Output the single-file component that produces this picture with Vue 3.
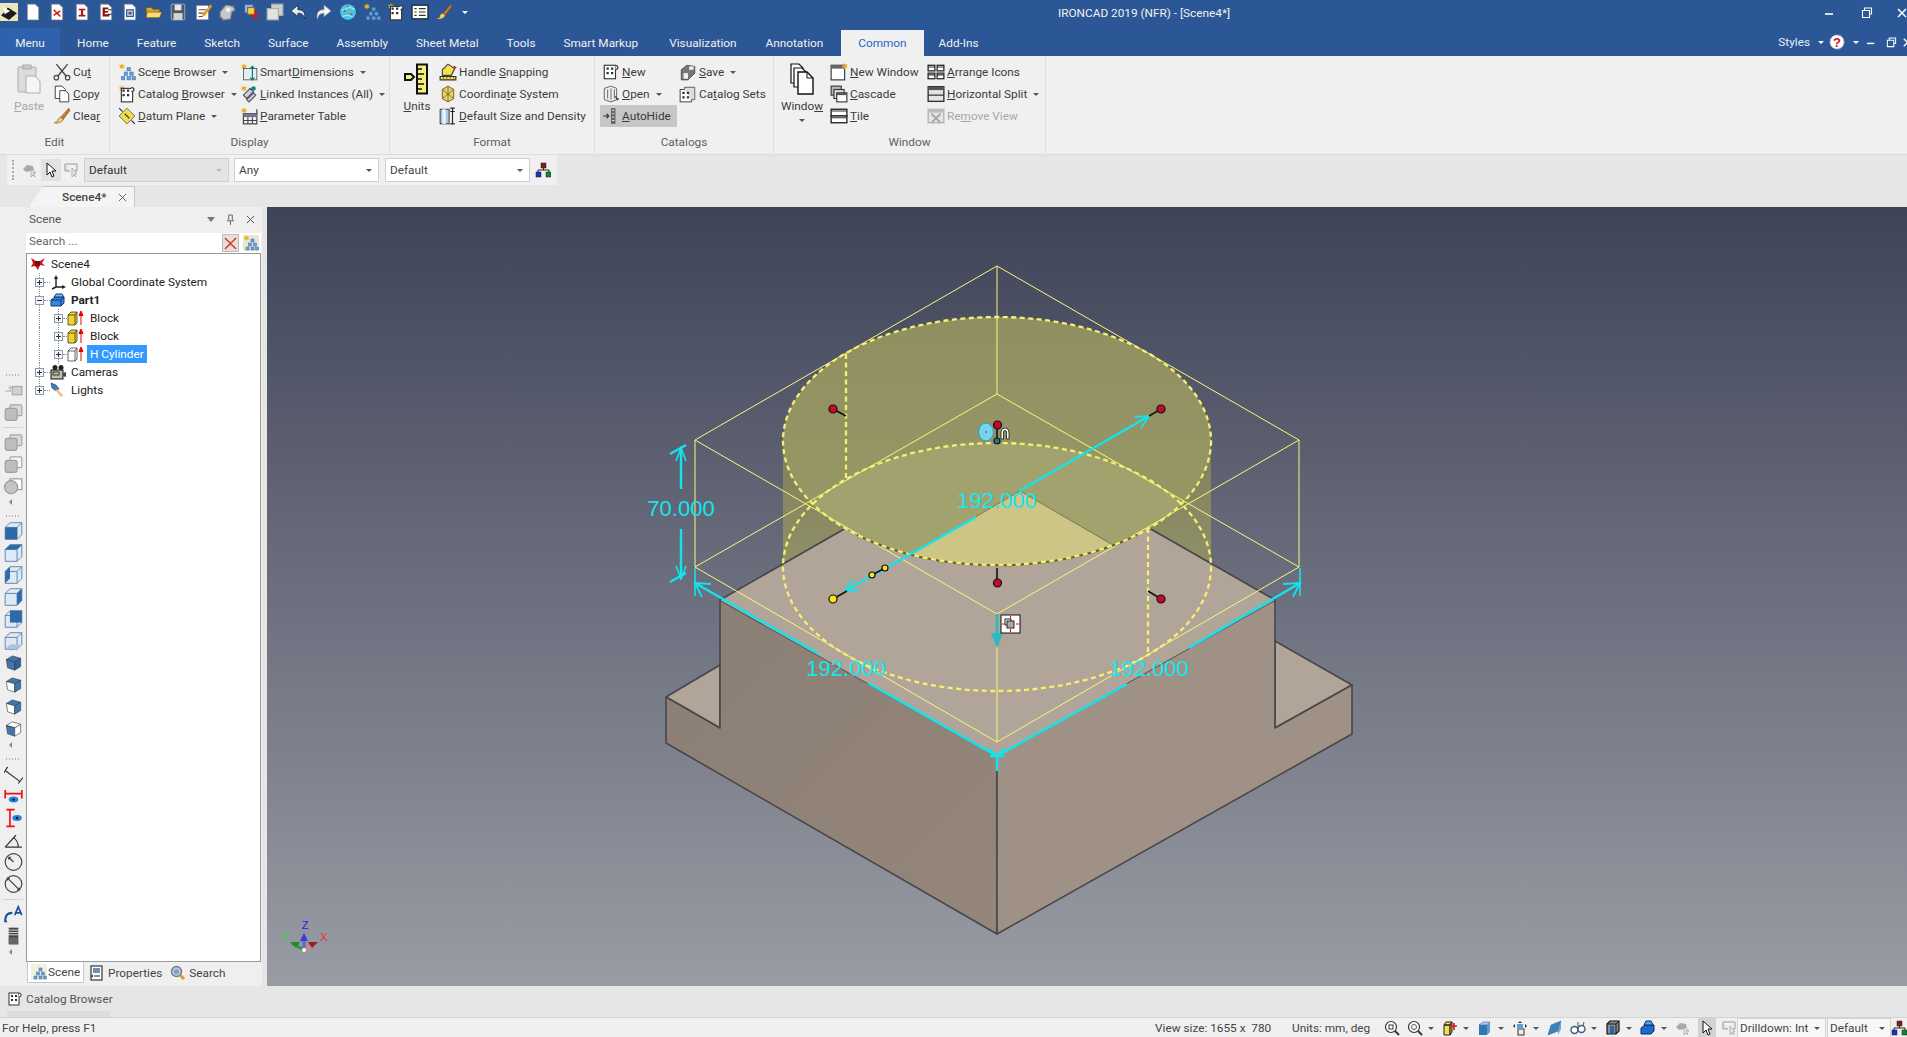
<template>
  <div class="app">
    <!-- title bar -->
    <div class="titlebar">
      <div class="qat">
        <svg v-for="q in qat" :key="q" class="ico qat-ico" viewBox="0 0 16 16" v-html="icons[q]"></svg>
        <span class="caret caret-white"></span>
      </div>
      <div class="title">IRONCAD 2019 (NFR) - [Scene4*]</div>
      <div class="win-btns">
        <svg class="win-btn" viewBox="0 0 12 12"><path d="M1 7h8" stroke="#fff" stroke-width="1.6"/></svg>
        <svg class="win-btn" viewBox="0 0 12 12"><path d="M3.5 3V1h7v6h-2M1.5 3.5h7v7h-7z" fill="none" stroke="#fff" stroke-width="1.1"/></svg>
        <svg class="win-btn win-close" viewBox="0 0 12 12"><path d="M2 2l8 8M10 2l-8 8" stroke="#fff" stroke-width="1.5"/></svg>
      </div>
    </div>

    <!-- ribbon tabs -->
    <div class="menubar">
      <div class="menu-btn">Menu</div>
      <div
        v-for="t in tabs"
        :key="t"
        class="tab"
        :class="{ active: t === 'Common' }"
      >{{ t }}</div>
      <div class="menu-right">
        <span>Styles</span>
        <span class="caret caret-white car-a"></span>
        <svg class="help" viewBox="0 0 16 16">
          <circle cx="8" cy="8" r="7" fill="#fff" stroke="#bbb" stroke-dasharray="2 1"/>
          <text x="8" y="12.5" text-anchor="middle" class="help-q">?</text>
        </svg>
        <span class="caret caret-white car-b"></span>
        <svg class="mini-btn mini-min" viewBox="0 0 12 12"><path d="M1 7h8" stroke="#fff" stroke-width="1.6"/></svg>
        <svg class="mini-btn mini-res" viewBox="0 0 12 12"><path d="M3.5 3V1h7v6h-2M1.5 3.5h7v7h-7z" fill="none" stroke="#fff" stroke-width="1.1"/></svg>
        <svg class="mini-btn mini-x" viewBox="0 0 12 12"><path d="M2 2l8 8M10 2l-8 8" stroke="#fff" stroke-width="1.5"/></svg>
      </div>
    </div>

    <!-- ribbon -->
    <div class="ribbon">
      <div v-for="g in groups" :key="g.name" class="group" :class="g.cls">
        <div class="group-body">
          <div v-if="g.big" class="big" :class="{ off: g.big.off }">
            <svg class="ico-big" viewBox="0 0 28 32" v-html="icons[g.big.icon]"></svg>
            <span class="big-lbl">
              <template v-for="(p, i) in keyed(g.big.label)" :key="i">
                <u v-if="i === 1">{{ p }}</u><template v-else>{{ p }}</template>
              </template>
            </span>
            <span v-if="g.big.caret" class="caret big-caret"></span>
          </div>
          <div v-for="(col, ci) in g.cols" :key="ci" class="col">
            <div
              v-for="it in col"
              :key="it.label"
              class="rb-item"
              :class="{ on: it.on, off: it.off }"
            >
              <svg class="ico rb-ico" viewBox="0 0 16 16" v-html="icons[it.icon]"></svg>
              <span>
                <template v-for="(p, i) in keyed(it.label)" :key="i">
                  <u v-if="i === 1">{{ p }}</u><template v-else>{{ p }}</template>
                </template>
              </span>
              <span v-if="it.caret" class="caret rb-caret"></span>
            </div>
          </div>
        </div>
        <div class="group-name">{{ g.name }}</div>
      </div>
    </div>

    <!-- selection toolbar -->
    <div class="toolrow">
      <div class="toolstrip">
        <span class="grip"></span>
        <svg class="ico tool-ico" viewBox="0 0 16 16" v-html="icons.selGrey"></svg>
        <span class="tool-on"><svg class="ico" viewBox="0 0 16 16" v-html="icons.arrow"></svg></span>
        <svg class="ico tool-ico" viewBox="0 0 16 16" v-html="icons.selBox"></svg>
        <div class="combo combo-off">Default<span class="caret"></span></div>
        <div class="combo">Any<span class="caret"></span></div>
        <div class="combo">Default<span class="caret"></span></div>
        <svg class="ico tree-ico" viewBox="0 0 16 16" v-html="icons.network"></svg>
      </div>
    </div>

    <!-- document tabs -->
    <div class="docrow">
      <div class="doctab">
        <span>Scene4*</span>
        <svg class="doc-x" viewBox="0 0 10 10"><path d="M1 1l8 8M9 1l-8 8" stroke="#555" stroke-width="1"/></svg>
      </div>
    </div>

    <!-- main area -->
    <div class="main">
      <div class="strip">
        <template v-for="(s, i) in strip" :key="i">
          <span v-if="s === 'dots'" class="dots"></span>
          <span v-else-if="s === 'sep'" class="strip-sep"></span>
          <span v-else-if="s === 'more'" class="more"></span>
          <svg v-else class="ico strip-ico" viewBox="0 0 16 16" v-html="icons[s]"></svg>
        </template>
      </div>

      <div class="panel">
        <div class="panel-head">
          <span>Scene</span>
          <span class="caret panel-caret"></span>
          <svg class="pin" viewBox="0 0 10 12"><path d="M3 1h4v5l1.5 1.5h-7L3 6zM5 8v4" fill="none" stroke="#555"/></svg>
          <svg class="pin-x" viewBox="0 0 10 10"><path d="M1 1l8 8M9 1l-8 8" stroke="#555" stroke-width="1.1"/></svg>
        </div>
        <div class="search">
          <span class="search-text">Search ...</span>
          <span class="search-x"><svg viewBox="0 0 14 14"><path d="M1 1l12 12M13 1L1 13" stroke="#d4343a" stroke-width="1.6"/></svg></span>
          <svg class="ico" viewBox="0 0 16 16" v-html="icons.sceneTree"></svg>
        </div>
        <div class="tree">
          <div v-for="r in rows" :key="r.id" class="row" :class="'lv' + r.level">
            <span v-if="r.level === 2" class="guide"></span>
            <span v-if="r.level > 0" class="exp" :class="{ last: r.last }">
              <i class="minus"></i><i v-if="!r.open" class="plus"></i>
            </span>
            <span v-if="r.level > 0" class="hdot"></span>
            <svg class="row-ico" :viewBox="r.level === 2 ? '0 0 18 16' : '0 0 16 16'" v-html="icons[r.icon]"></svg>
            <span class="lbl" :class="{ bold: r.bold, sel: r.sel }">{{ r.label }}</span>
          </div>
        </div>
        <div class="panel-tabs">
          <div class="ptab ptab-on"><svg class="ico" viewBox="0 0 16 16" v-html="icons.sceneBlue"></svg>Scene</div>
          <div class="ptab"><svg class="ico" viewBox="0 0 16 16" v-html="icons.props"></svg>Properties</div>
          <div class="ptab"><svg class="ico" viewBox="0 0 16 16" v-html="icons.find"></svg>Search</div>
        </div>
      </div>

      <!-- 3D view -->
      <div class="view">
        <svg class="scene" viewBox="267 206 1640 779">
          <defs>
            <linearGradient id="bodyG" x1="0" y1="0" x2="0" y2="1">
              <stop offset="0" stop-color="#7f805c"/>
              <stop offset="1" stop-color="#909068"/>
            </linearGradient>
            <linearGradient id="topG" x1="0" y1="0" x2="0" y2="1">
              <stop offset="0" stop-color="#8f8f60"/>
              <stop offset="1" stop-color="#9a9a68"/>
            </linearGradient>
            <linearGradient id="leftG" x1="0" y1="0" x2="1" y2="1">
              <stop offset="0" stop-color="#8b7e74"/>
              <stop offset="1" stop-color="#94867b"/>
            </linearGradient>
            <clipPath id="topClip"><ellipse cx="997" cy="440" rx="214" ry="124"/></clipPath>
            <clipPath id="lowClip"><ellipse cx="997" cy="566" rx="214" ry="124"/></clipPath>
          </defs>

          <!-- stepped base -->
          <g stroke="#47474a" stroke-width="1.6" stroke-linejoin="round">
            <polygon points="666,696 720,664 720,727" fill="#b1a498"/>
            <polygon points="1275,640 1352,684 1275,727" fill="#b1a498"/>
            <polygon points="720,599 997,755 997,933 666,742 666,696 720,727" fill="url(#leftG)"/>
            <polygon points="997,755 1275,599 1275,727 1352,684 1352,733 997,933" fill="#9f9185"/>
          </g>

          <!-- cylinder -->
          <rect x="783" y="440" width="428" height="126" fill="url(#bodyG)"/>
          <polygon points="720,599 997,442 1275,599 997,755" fill="#b1a498"/>
          <path d="M720 599L860 519M1275 599L1135 519" stroke="#47474a" stroke-width="1.6"/>
          <ellipse cx="997" cy="440" rx="214" ry="124" fill="url(#topG)"/>
          <g clip-path="url(#topClip)">
            <ellipse cx="997" cy="566" rx="214" ry="124" fill="#a2a26f"/>
            <g clip-path="url(#lowClip)">
              <polygon points="1020,490 860,583 1180,583" fill="#cdc585"/>
              <path d="M1020 490L860 583M1020 490L1180 583" stroke="#7c7a52" stroke-width="1"/>
            </g>
          </g>

          <!-- bounding box -->
          <g fill="none" stroke="#f8f87c" stroke-width="1">
            <polygon points="997,265 1299,439 997,613 695,439"/>
            <polygon points="997,393 1299,566 997,741 695,566"/>
            <path d="M997 265V393M997 613V741M695 439V566M1299 439V566"/>
          </g>

          <!-- dashed cylinder edges -->
          <path d="M857 534A214 124 0 0 0 1137 534" fill="none" stroke="#63623f" stroke-width="2"/>
          <g fill="none" stroke="#f6f070" stroke-width="2.3" stroke-dasharray="5 3.5">
            <ellipse cx="997" cy="440" rx="214" ry="124"/>
            <ellipse cx="997" cy="566" rx="214" ry="124"/>
            <path d="M846 353V480M1148 527V655"/>
          </g>

          <!-- dimensions -->
          <g fill="none" stroke="#12e4ee" stroke-width="2.4">
            <path d="M681 447V488M681 528V578M670 453L686 444M670 581L686 572"/>
            <path d="M676 460L681 447L686 460M676 565L681 578L686 565" stroke-width="1.6"/>
            <path d="M695 582L819 653M868 682L997 755L1127 683M1189 647L1300 582"/>
            <path d="M695 567V595M1300 567V595" stroke-width="1.6"/>
            <path d="M702 596L695 582L711 583M1283 583L1300 582L1293 596" stroke-width="1.8"/>
            <path d="M989 748L997 755L1005 748M997 755V770M990 755H1004"/>
            <path d="M845 590L976 516M1019 490L1149 415"/>
            <path d="M859 589L845 590L853 578M1135 416L1149 415L1141 427" stroke-width="1.8"/>
          </g>
          <path d="M997 613V645" stroke="#2cb9bf" stroke-width="2.6"/>
          <path d="M991 632L997 647L1003 632z" fill="#2cb9bf"/>

          <g class="dim-text">
            <text x="681" y="515">70.000</text>
            <text x="997" y="507">192.000</text>
            <text x="846" y="675">192.000</text>
            <text x="1149" y="675">192.000</text>
          </g>

          <!-- handles -->
          <g stroke="#111" stroke-width="1.6">
            <path d="M833 408L846 415M1161 408L1149 415M997 582V567M1161 598L1148 590M833 598L847 590M872 574L885 567M997 424V440"/>
          </g>
          <g stroke="#111" stroke-width="1.2">
            <circle cx="833" cy="408" r="4" fill="#c4092b"/>
            <circle cx="1161" cy="408" r="4" fill="#c4092b"/>
            <circle cx="997.5" cy="582" r="4" fill="#c4092b"/>
            <circle cx="1161" cy="598" r="4" fill="#c4092b"/>
            <circle cx="997.5" cy="424" r="4" fill="#c4092b"/>
            <circle cx="833" cy="598" r="4" fill="#f4e61c"/>
            <circle cx="872" cy="574" r="3" fill="#f4e61c"/>
            <circle cx="885" cy="567" r="3" fill="#f4e61c"/>
            <circle cx="997" cy="440" r="3" fill="#16808a"/>
          </g>
          <ellipse cx="986" cy="431" rx="7.5" ry="9" fill="#6fd6ee" stroke="#3a8fc0"/>
          <circle cx="986" cy="431" r="1" fill="#e33"/>
          <path d="M1001 438v-7a4 4 0 0 1 8 0v7h-2.5v-7a1.5 1.5 0 0 0-3 0v7z" fill="#fff" stroke="#111" stroke-width=".8"/>

          <!-- handle box -->
          <rect x="1001" y="614" width="19" height="18" fill="#fff" stroke="#111"/>
          <rect x="1007" y="620" width="7" height="7" fill="#aaa" stroke="#222"/>
          <path d="M1005 618h6v2M1005 618v6h2" fill="none" stroke="#222"/>
          <path d="M1010.5 615v3M1010.5 628v3M1002 623h3M1016 623h3" stroke="#e11" stroke-width="1.2"/>

          <!-- triad -->
          <path d="M304 949V935" stroke="#5f63d8" stroke-width="3"/>
          <path d="M300 940L304 932L308 940z" fill="#3c40d0"/>
          <path d="M304 949L292 942" stroke="#2f9a3a" stroke-width="3"/>
          <path d="M290 941L300 941L296 947z" fill="#1b8e2a"/>
          <path d="M304 949L316 942" stroke="#e07a80" stroke-width="3"/>
          <path d="M318 941L308 941L312 947z" fill="#912126"/>
          <circle cx="304" cy="949" r="2" fill="#fff"/>
          <g class="triad-text">
            <text x="305" y="928" fill="#1a1af0">Z</text>
            <text x="324" y="940" fill="#ee2a2a">X</text>
            <text x="285" y="940" fill="#22dd22">Y</text>
          </g>
        </svg>
      </div>
    </div>

    <!-- catalog bar -->
    <div class="catalog">
      <div class="cat-tab">
        <svg class="ico" viewBox="0 0 16 16" v-html="icons.catNew"></svg>
        <span>Catalog Browser</span>
      </div>
      <span class="cat-bar"></span>
    </div>

    <!-- status bar -->
    <div class="status">
      <span class="st-help">For Help, press F1</span>
      <span class="st-size">View size: 1655 x&nbsp; 780</span>
      <span class="st-units">Units: mm, deg</span>
      <template v-for="(s, i) in statusIcons" :key="i">
        <span v-if="s === 'caret'" class="caret st-caret"></span>
        <span v-else-if="s === 'arrow'" class="st-on"><svg class="ico" viewBox="0 0 16 16" v-html="icons.arrow"></svg></span>
        <svg v-else class="ico st-ico" viewBox="0 0 16 16" v-html="icons[s]"></svg>
      </template>
      <div class="st-combo st-drill">Drilldown: Int<span class="caret"></span></div>
      <div class="st-combo st-def">Default<span class="caret"></span></div>
      <svg class="ico" viewBox="0 0 16 16" v-html="icons.network"></svg>
    </div>
  </div>
</template>

<script setup>
const star = '<path d="M3.5 0l.7 2 2-.6-1.2 1.7 1.2 1.7-2-.6-.7 2-.7-2-2 .6 1.2-1.7L.8 1.4l2 .6z" fill="#e8b020"/>'
const tree = '<g fill="#6d9fd6" stroke="#3b74b0" stroke-width=".5"><rect x="8" y="4" width="3" height="3"/><rect x="5.5" y="8" width="3" height="3"/><rect x="10.5" y="8" width="3" height="3"/><rect x="3" y="12" width="3" height="3"/><rect x="8" y="12" width="3" height="3"/><rect x="12.5" y="12" width="3" height="3"/></g>'
const grid = '<rect x="2" y="2" width="10" height="12" fill="#fff" stroke="#333"/><path d="M12 2l2 1v2l-2 1" fill="#fff" stroke="#333"/><g fill="#333"><rect x="4" y="4" width="2" height="2"/><rect x="8" y="4" width="2" height="2"/><rect x="4" y="8" width="2" height="2"/><rect x="8" y="8" width="2" height="2"/></g>'
const brush = '<path d="M14 1L7 9l2 2 6-8z" fill="#c87a3a" stroke="#6b3b16" stroke-width=".5"/><path d="M7 9c-2 0-3 2-3 4-1 0-2 .5-3 1 3 1 7 0 8-3z" fill="#f0d060" stroke="#555" stroke-width=".5"/>'
const docBase = '<path d="M3 1h7l3 3v11H3z" fill="#fff" stroke="#888" stroke-width=".6"/>'
const wireCube = '<path d="M1 5h10v10H1zM1 5l4-4h10v10l-4 4M11 5l4-4" fill="#dfe9f5" stroke="#5f85b0" stroke-width=".8"/>'
const solid = (top, left, right) => `<path d="M2 5l5-3 7 2-5 3z" fill="${top}" stroke="#333" stroke-width=".5"/><path d="M2 5l7 2v7L3 12z" fill="${left}" stroke="#333" stroke-width=".5"/><path d="M9 7l5-3v7l-5 3z" fill="${right}" stroke="#333" stroke-width=".5"/>`
const blockIcon = (c) => `<path d="M1 5l3-3h6v11l-2 2H1z" fill="${c}" stroke="#222" stroke-width=".7"/><path d="M1 5h7v10M8 5l2-3" fill="none" stroke="#222" stroke-width=".7"/><path d="M14 15V3M12 5.5L14 1l2 4.5z" stroke="#e00" fill="#e00"/>`
const greyCube = '<rect x="5" y="2" width="10" height="9" rx="1" fill="#d9d9d9" stroke="#a8a8a8"/><rect x="1" y="5" width="10" height="10" rx="2" fill="#bdbdbd" stroke="#a0a0a0"/>'

const icons = {
  logo: '<rect width="16" height="16" fill="#e9e5bd"/><path d="M1 11L7 4l8 5-7 6z" fill="#1c1c1c"/><path d="M3 4l6 3-5 3z" fill="#fff"/>',
  newDoc: docBase,
  redDoc: docBase + '<path d="M5 6l6 6M11 7l-6 4" stroke="#d01818" stroke-width="1.4"/>',
  iDoc: docBase + '<path d="M5 5h6v1.5H9v4h2V12H5v-1.5h2v-4H5z" fill="#a81818"/>',
  eDoc: docBase + '<path d="M5 4h5v1.5H7V7h3v1.5H7V10h4v2H5z" fill="#8a1010"/><path d="M10 6h3M10 10h3" stroke="#222"/>',
  partDoc: docBase + '<rect x="5" y="6" width="6" height="6" fill="#9fd0f0" stroke="#1860a8"/><circle cx="8" cy="9" r="1.3" fill="#c22"/>',
  open: '<path d="M1 4h5l1 1.5h6V13H1z" fill="#d8a928" stroke="#6a5210" stroke-width=".6"/><path d="M2 8h13l-2 5H1z" fill="#f7de7a" stroke="#6a5210" stroke-width=".6"/>',
  save: '<rect x="2" y="1" width="12" height="14" rx="1" fill="#4b5a6a" stroke="#ccc" stroke-width=".6"/><rect x="5" y="1.5" width="6" height="5" fill="#e7e7e7"/><rect x="4" y="9" width="8" height="6" fill="#d4d4d4"/>',
  note: '<rect x="2" y="2" width="11" height="13" fill="#fff" stroke="#666" stroke-width=".6"/><path d="M4 6h7M4 9h5M4 12h4" stroke="#555"/><path d="M15 1L8 9l-1 3 3-1 6-8z" fill="#e8a020"/>',
  gear: '<path d="M2 8l5-6 6 1 2 3-3 2-1 6-6 1-3-3z" fill="#c7c7c7" stroke="#8e8e8e"/><circle cx="9" cy="6" r="2" fill="#eee"/>',
  cubePlus: '<rect x="2" y="1" width="8" height="8" fill="#8ab4e8" stroke="#2255aa"/><rect x="5" y="4" width="6" height="6" fill="#f5d050" stroke="#a06a10"/><path d="M12 8v7M8.5 11.5h7" stroke="#d01818" stroke-width="1.6"/>',
  grayDoc: '<rect x="5" y="1" width="10" height="10" fill="#cfcfcf" stroke="#aaa"/><rect x="1" y="5" width="10" height="10" fill="#e2e2e2" stroke="#aaa"/>',
  undo: '<path d="M7 2L1 7l6 5V9c3 0 5 1 6 5 1-5-1-8-6-8z" fill="#e8eef6" stroke="#223" stroke-width=".7"/>',
  redo: '<path d="M9 2l6 5-6 5V9C6 9 4 10 3 14 2 9 4 6 9 6z" fill="#f7f7f7" stroke="#aaa" stroke-width=".7"/>',
  globe: '<circle cx="8" cy="8" r="7" fill="#45c8e0"/><path d="M2 6c3 1 5-1 7-3 2 2 4 2 5 3M3 12c2-1 6-1 9 0" stroke="#a9ecf5" fill="none"/><g fill="#e33"><circle cx="5" cy="7" r="1"/><circle cx="11" cy="10" r="1"/><circle cx="8" cy="3" r=".8"/></g>',
  sceneTree: star + tree,
  sceneBlue: '<rect width="16" height="16" fill="#f0ead0" opacity=".7"/>' + tree,
  catStar: star + grid.replace('x="2" y="2" width="10"', 'x="3" y="3" width="10"'),
  list: '<rect x="1" y="2" width="14" height="12" fill="#fff" stroke="#222"/><path d="M3 5h2M3 8h2M3 11h2M7 5h6M7 8h6M7 11h6" stroke="#333"/>',
  brush,
  paste: '<rect x="3" y="4" width="18" height="25" rx="1" fill="#dcdcdc" stroke="#adadad"/><rect x="8" y="2" width="8" height="4" fill="#cacaca" stroke="#a8a8a8"/><path d="M11 13h9l5 5v12H11z" fill="#f5f5f5" stroke="#adadad"/>',
  cut: '<path d="M3 1l9 11M13 1L4 12" stroke="#444" stroke-width="1.2"/><circle cx="3" cy="13" r="2" fill="none" stroke="#444"/><circle cx="13" cy="13" r="2" fill="none" stroke="#444"/>',
  copy: '<path d="M2 1h6l3 3v8H2z" fill="#fff" stroke="#333" stroke-width=".8"/><path d="M6 5h5l3 3v7H6z" fill="#fff" stroke="#333" stroke-width=".8"/>',
  datum: '<path d="M8 1l7 7-7 7-7-7z" fill="#f2dc4c" stroke="#555" stroke-width=".7"/><path d="M6 6l4 4" stroke="#333"/><path d="M1 1l3 3M12 12l3 3" stroke="#335"/>',
  smartDim: star + '<rect x="3" y="5" width="12" height="10" fill="#dff0f4" stroke="#333" stroke-width=".6"/><path d="M11 3v12M9 5l2-2 2 2M9 13l2 2 2-2" fill="none" stroke="#0a7a5a"/>',
  linked: star + '<path d="M3 9l6-6 3 3-6 6zM6 13l6-6 2 2-6 6z" fill="#ccd" stroke="#556"/><circle cx="12" cy="3" r="2" fill="#0a8a6a"/>',
  paramTable: star + '<rect x="3" y="6" width="12" height="9" fill="#f4f4f4" stroke="#333"/><rect x="3" y="6" width="12" height="3" fill="#6d7a8c"/><path d="M7 9v6M11 9v6M3 12h12" stroke="#444"/><path d="M15 2v4" stroke="#333"/>',
  units: '<rect x="14" y="1.5" width="10" height="29" fill="#f1f17a" stroke="#111" stroke-width="2"/><path d="M14 6h5M14 11h7M14 16h5M14 21h7M14 26h5" stroke="#111" stroke-width="1.4"/><path d="M2 11h6l3 3-3 3H2z" fill="#f1f17a" stroke="#111" stroke-width="2"/>',
  snap: '<path d="M3 6l5-5 6 4-3 6H3z" fill="#f6e050" stroke="#444"/><path d="M13 3l2 1-2 1" stroke="#a22" fill="none"/><path d="M1 12h14v3H1z" fill="#f6e050" stroke="#333"/><path d="M4 12v2M7 12v2M10 12v2M13 12v2" stroke="#333" stroke-width=".6"/>',
  coord: '<path d="M8 1l5 3v8l-5 3-5-3V4z" fill="#ecd36a" stroke="#8a7530"/><path d="M3 4l10 8M13 4L3 12M8 1v14" stroke="#7a6a30" stroke-width=".8"/>',
  sizeDens: '<rect x="1" y="2" width="8" height="13" fill="#a9c8e8" stroke="#333" stroke-width=".8"/><rect x="3" y="2" width="3" height="13" fill="#e8f2fb"/><path d="M12 1v14M10 1h4M10 15h4M10 4h4" fill="none" stroke="#222"/>',
  catNew: grid,
  catOpen: '<path d="M2 3l6-2 5 2v10l-5 2-6-2z" fill="#eee" stroke="#444" stroke-width=".7"/><path d="M5 4v8M8 3v10M11 4v8" stroke="#777"/><path d="M12 10l1.5 3 1.5-1" stroke="#333" fill="none"/>',
  autoHide: '<path d="M1 8h5M4 6l2 2-2 2" stroke="#333" fill="none"/><rect x="8" y="1" width="4" height="14" fill="#666"/><path d="M9 3h2M9 6h2M9 9h2M9 12h2" stroke="#eee" stroke-width=".8"/>',
  catSave: '<path d="M2 6l5-4 7 1v6l-6 6H2z" fill="#777" stroke="#333" stroke-width=".6"/><rect x="4" y="9" width="4" height="5" fill="#eee"/><path d="M9 3h4v3H9z" fill="#eee"/>',
  catSets: '<rect x="1" y="4" width="10" height="11" fill="#fff" stroke="#333" stroke-width=".8"/><path d="M5 4V2h9v11h-3" fill="#ddd" stroke="#555" stroke-width=".8"/><g fill="#333"><rect x="3" y="6" width="2" height="2"/><rect x="7" y="6" width="2" height="2"/><rect x="3" y="10" width="2" height="2"/><rect x="7" y="10" width="2" height="2"/></g>',
  windowBig: '<path d="M3 1h8l4 4v15H3z" fill="#fff" stroke="#111" stroke-width="1.2"/><path d="M6 5h8l4 4v15H6z" fill="#fff" stroke="#111" stroke-width="1.2"/><path d="M10 9h9l6 6v16H10z" fill="#fff" stroke="#111" stroke-width="1.4"/><path d="M19 9v6h6" fill="none" stroke="#111"/>',
  newWin: '<rect x="1" y="2" width="12" height="13" fill="#fff" stroke="#333"/><rect x="1" y="2" width="12" height="3" fill="#666"/><path d="M13 0l.8 1.6 1.8-.4-1 1.6 1 1.6-1.8-.4-.8 1.600-.8-1.600-1.800.4 1-1.600-1-1.600 1.800.4z" fill="#e8a020"/>',
  cascade: '<rect x="1" y="1" width="9" height="8" fill="#bbb" stroke="#333"/><rect x="3.500" y="4" width="9" height="8" fill="#ddd" stroke="#333"/><rect x="6" y="7" width="9" height="8" fill="#fff" stroke="#333"/><rect x="6" y="7" width="9" height="2" fill="#555"/>',
  tile: '<rect x="1" y="2" width="14" height="6" fill="#fff" stroke="#222" stroke-width="1.200"/><rect x="1" y="8" width="14" height="6" fill="#fff" stroke="#222" stroke-width="1.200"/><path d="M1 3.500h14M1 9.500h14" stroke="#333"/>',
  arrange: '<g fill="#fff" stroke="#222" stroke-width="1.100"><rect x="1" y="2" width="6" height="5"/><rect x="9" y="2" width="6" height="5"/><rect x="1" y="9" width="6" height="5"/><rect x="9" y="9" width="6" height="5"/></g><path d="M1 3.500h6M9 3.500h6M1 10.500h6M9 10.500h6" stroke="#333"/>',
  hsplit: '<rect x="1" y="1.500" width="14" height="13" fill="#e4e4e4" stroke="#222" stroke-width="1.100"/><rect x="1" y="1.500" width="14" height="3" fill="#555"/><path d="M1 9h14" stroke="#222"/>',
  removeView: '<rect x="1" y="2" width="14" height="12" fill="#e6e6e6" stroke="#aaa"/><rect x="1" y="2" width="14" height="3" fill="#bbb"/><path d="M4 6l8 8M12 6l-8 8" stroke="#aaa" stroke-width="1.800"/>',
  selGrey: '<path d="M1 7l4-4 6 1 1 4-3 1-5 1z" fill="#a9a9a9"/><path d="M9 7v8l2-2 2 2-2-4h3z" fill="#e8e8e8" stroke="#999" stroke-width=".7"/>',
  arrow: '<path d="M4 1v12l3-3 2 5 2-1-2-5h4z" fill="#fff" stroke="#111"/>',
  selBox: '<path d="M1 2h12v7H8" fill="none" stroke="#999"/><path d="M1 2v7h5" fill="#e4e4e4" stroke="#999"/><path d="M8 6v9l2-2 2 2-2-3h3z" fill="#eee" stroke="#999" stroke-width=".7"/>',
  network: '<rect x="6" y="1" width="5" height="5" fill="#8b1a1a" stroke="#222" stroke-width=".5"/><path d="M8.500 6v2M3 10V8h11v2" fill="none" stroke="#222"/><rect x="1" y="10" width="5" height="5" fill="#1a2fd0" stroke="#222" stroke-width=".5"/><rect x="11" y="10" width="5" height="5" fill="#118a2a" stroke="#222" stroke-width=".5"/>',
  sceneRed: '<path d="M1 2l5 3 4 0 5-3-3 5 3 3-5-1-2 5-3-4-4 1 2-4z" fill="#d21414"/><path d="M5 5h5v5H5z" fill="#6b1010"/>',
  axes: '<path d="M6 13V4M6 13h8M6 13l-4 2" stroke="#222" stroke-width="1.400"/><path d="M4 5l2-4 2 4zM12 11l4 2-4 2z" fill="#222"/>',
  part: '<path d="M1 8l4-3h9v6l-3 3H1z" fill="#3a86d8" stroke="#0c3a80"/><path d="M4 5l2-3h6l2 3z" fill="#7ab8f0" stroke="#0c3a80"/><path d="M1 8h10v6M11 8l3-3" fill="none" stroke="#0c3a80"/>',
  blockY: blockIcon('#f2d22c'),
  blockW: blockIcon('#fff'),
  camera: '<circle cx="5" cy="3.500" r="2.500" fill="#222"/><circle cx="11" cy="3.500" r="2.500" fill="#222"/><rect x="1" y="6" width="12" height="9" fill="#bbb" stroke="#111"/><rect x="3" y="8" width="6" height="3" fill="#d2c27a" stroke="#333"/><path d="M13 9l3-1v5l-3-1z" fill="#444"/>',
  light: '<path d="M1 1l5 2 3 4-3 2-4-3z" fill="#3b7dc8" stroke="#16386a" stroke-width=".6"/><path d="M7 7l8 7-5 1-5-6z" fill="#f6ecbc"/><path d="M5 6l7 8" stroke="#e45" stroke-width=".8"/>',
  props: '<rect x="2" y="1" width="11" height="14" fill="#fff" stroke="#222" stroke-width="1.100"/><rect x="4" y="3" width="7" height="5" fill="#6d8fb5"/><path d="M5 11h6M4 10l-1.500 1 1.500 1" stroke="#222" fill="none"/>',
  find: '<circle cx="6.500" cy="6.500" r="5" fill="#b9cbe8" stroke="#7a7a7a" stroke-width="1.400"/><circle cx="6.500" cy="6.500" r="2.600" fill="#7f9fd0"/><path d="M10 10l4 4" stroke="#d49a28" stroke-width="3"/>',
  stepCube1: greyCube,
  pull: '<path d="M1 9h5" stroke="#bbb"/><path d="M4 6h3M5 4v5" stroke="#bbb"/><rect x="7" y="5" width="8" height="7" fill="#cfcfcf" stroke="#aaa"/>',
  stepCube2: greyCube,
  stepCube3: '<rect x="5" y="2" width="10" height="9" rx="1" fill="#f4f4f4" stroke="#a8a8a8"/><rect x="1" y="5" width="10" height="10" rx="2" fill="#bdbdbd" stroke="#a0a0a0"/>',
  stepRound: '<rect x="5" y="2" width="10" height="9" fill="#fff" stroke="#999"/><circle cx="6" cy="9" r="5.500" fill="#c4c4c4" stroke="#999"/>',
  faceFront: wireCube + '<rect x="1" y="5" width="10" height="10" fill="#2f6aa8"/>',
  faceTop: wireCube + '<path d="M1 5l4-4h10l-4 4z" fill="#2f6aa8"/>',
  faceLeft: wireCube + '<path d="M1 5l4-4v10l-4 4z" fill="#2f6aa8"/>',
  faceRight: wireCube + '<path d="M11 5l4-4v10l-4 4z" fill="#2f6aa8"/>',
  faceBack: wireCube + '<rect x="5" y="1" width="10" height="10" fill="#2f6aa8"/>',
  faceBottom: wireCube + '<path d="M1 15l4-4h10l-4 4z" fill="#a8c4e0"/>',
  iso1: solid('#3f77b5', '#3f77b5', '#2f62a0'),
  iso2: solid('#fff', '#fff', '#3f77b5').replace(/#fff/, '#3f77b5'),
  iso3: solid('#3f77b5', '#fff', '#3f77b5'),
  iso4: solid('#3f77b5', '#3f77b5', '#fff').replace(/#3f77b5/, '#fff'),
  dimLine: '<path d="M1 5l12 9M3 2L0 7M16 11l-4 5" stroke="#333" fill="none"/>',
  dimRedH: '<path d="M1 3v7M15 3v7M1 6h14" stroke="#e11" stroke-width="1.400"/><ellipse cx="8" cy="11" rx="4" ry="2.500" fill="#2a82d8"/><circle cx="8" cy="11" r="1" fill="#111"/>',
  dimRedV: '<path d="M2 1h7M2 15h7M5 1v14" stroke="#e11" stroke-width="1.400"/><ellipse cx="11" cy="8" rx="4" ry="2.500" fill="#2a82d8"/><circle cx="11" cy="8" r="1" fill="#111"/>',
  dimAngle: '<path d="M1 14h14M1 14L10 4" stroke="#333"/><path d="M8 6c3 2 4 5 4 8" stroke="#333" fill="none"/>',
  dimRadius: '<circle cx="8" cy="8" r="7" fill="none" stroke="#444"/><path d="M8 8L4 4M4 6V4h2" stroke="#444" fill="none"/>',
  dimDia: '<circle cx="8" cy="8" r="7" fill="none" stroke="#444"/><path d="M3 3l10 10M3 5V3h2M13 11v2h-2" stroke="#444" fill="none"/>',
  dimText: '<path d="M1 14c0-5 2-7 6-7" stroke="#1c4f9a" stroke-width="1.800" fill="none"/><path d="M1 12l2 3-3 0z" fill="#1c4f9a"/><path d="M9 9l3-7 3 7M10 7h4" stroke="#1c4f9a" stroke-width="1.400" fill="none"/>',
  hatch: '<rect x="4" y="1" width="8" height="14" fill="#444"/><path d="M4 3h8M4 5h8M4 7h8" stroke="#ddd" stroke-width=".8"/><rect x="4" y="9" width="8" height="6" fill="#666"/>',
  zoomFit: '<circle cx="7" cy="7" r="5.500" fill="#fff" stroke="#333" stroke-width="1.200"/><rect x="5" y="5" width="4" height="4" fill="none" stroke="#333"/><path d="M11 11l4 4" stroke="#333" stroke-width="2"/>',
  zoom: '<circle cx="7" cy="7" r="5.500" fill="#fff" stroke="#333" stroke-width="1.200"/><circle cx="7" cy="7" r="2.500" fill="none" stroke="#555"/><path d="M11 11l4 4" stroke="#333" stroke-width="2"/>',
  stYellow: '<path d="M2 5l2-3h6l-2 3zM2 5h6v10H2z" fill="#f4dd52" stroke="#222"/><path d="M8 5l2-3v10l-2 3z" fill="#c8a820" stroke="#222"/><path d="M12 3v7M9 6h6" stroke="#e11" stroke-width="1.600"/>',
  stBlue: '<path d="M2 5l4-3h7l-3 3z" fill="#a9c8e8" stroke="#2a4a7a" stroke-width=".5"/><rect x="2" y="5" width="8" height="10" fill="#2f78b8"/><path d="M10 5l3-3v10l-3 3z" fill="#5f9cd0"/>',
  stPan: '<rect x="6" y="9" width="6" height="6" fill="#eee" stroke="#333"/><path d="M8 1l2 2H6zM1 6l2-2v4zM15 6l-2-2v4z" fill="#234"/><rect x="5" y="4" width="6" height="4" fill="#5aa0d8"/>',
  stSlab: '<path d="M1 15l3-10 10-4-3 10z" fill="#3f80bc" stroke="#2a5a8a" stroke-width=".5"/><path d="M11 11l3-10v8l-3 6z" fill="#6fa8d6"/>',
  stGlass: '<circle cx="4.500" cy="10" r="3.500" fill="#fff" stroke="#3a5a80" stroke-width="1.400"/><circle cx="11.500" cy="9" r="3.500" fill="#fff" stroke="#3a5a80" stroke-width="1.400"/><path d="M8 9V2M13 6l1-4" stroke="#3a5a80"/>',
  stBox: '<path d="M2 4l3-3h9v10l-3 3H2z" fill="#8f8f8f" stroke="#111" stroke-width="1.200"/><path d="M2 4h9v10M11 4l3-3" fill="none" stroke="#111"/><rect x="5" y="6" width="4" height="7" fill="#1c6ab5"/>',
  stPart: '<path d="M1 8l4-3h9v6l-3 3H1z" fill="#1c6ad0" stroke="#0c2a60"/><path d="M4 5l2-4h5l2 4z" fill="#5aa0ee" stroke="#0c2a60"/>'
}

const qat = ['logo', 'newDoc', 'redDoc', 'iDoc', 'eDoc', 'partDoc', 'open', 'save', 'note', 'gear', 'cubePlus', 'grayDoc', 'undo', 'redo', 'globe', 'sceneTree', 'catStar', 'list', 'brush']

const tabs = ['Home', 'Feature', 'Sketch', 'Surface', 'Assembly', 'Sheet Metal', 'Tools', 'Smart Markup', 'Visualization', 'Annotation', 'Common', 'Add-Ins']

// "&" marks the access key, it is drawn underlined
const keyed = (s) => {
  const i = s.indexOf('&')
  return [s.slice(0, i), s[i + 1], s.slice(i + 2)]
}

const groups = [
  {
    name: 'Edit',
    cls: 'g-edit',
    big: { icon: 'paste', label: '&Paste', off: true },
    cols: [[
      { icon: 'cut', label: 'Cu&t' },
      { icon: 'copy', label: '&Copy' },
      { icon: 'brush', label: 'Clea&r' }
    ]]
  },
  {
    name: 'Display',
    cls: 'g-display',
    cols: [
      [
        { icon: 'sceneTree', label: 'Sce&ne Browser', caret: true },
        { icon: 'catStar', label: 'Catalog &Browser', caret: true },
        { icon: 'datum', label: '&Datum Plane', caret: true }
      ],
      [
        { icon: 'smartDim', label: 'Smart&Dimensions', caret: true },
        { icon: 'linked', label: '&Linked Instances (All)', caret: true },
        { icon: 'paramTable', label: '&Parameter Table' }
      ]
    ]
  },
  {
    name: 'Format',
    cls: 'g-format',
    big: { icon: 'units', label: '&Units' },
    cols: [[
      { icon: 'snap', label: 'Handle &Snapping' },
      { icon: 'coord', label: 'Coordina&te System' },
      { icon: 'sizeDens', label: '&Default Size and Density' }
    ]]
  },
  {
    name: 'Catalogs',
    cls: 'g-catalogs',
    cols: [
      [
        { icon: 'catNew', label: '&New' },
        { icon: 'catOpen', label: '&Open', caret: true },
        { icon: 'autoHide', label: '&AutoHide', on: true }
      ],
      [
        { icon: 'catSave', label: '&Save', caret: true },
        { icon: 'catSets', label: 'Ca&talog Sets' }
      ]
    ]
  },
  {
    name: 'Window',
    cls: 'g-window',
    big: { icon: 'windowBig', label: 'Windo&w', caret: true },
    cols: [
      [
        { icon: 'newWin', label: '&New Window' },
        { icon: 'cascade', label: '&Cascade' },
        { icon: 'tile', label: '&Tile' }
      ],
      [
        { icon: 'arrange', label: '&Arrange Icons' },
        { icon: 'hsplit', label: '&Horizontal Split', caret: true },
        { icon: 'removeView', label: 'Re&move View', off: true }
      ]
    ]
  }
]

const strip = [
  'dots', 'pull', 'stepCube1', 'sep', 'stepCube2', 'stepCube3', 'stepRound', 'more',
  'dots', 'faceFront', 'faceTop', 'faceLeft', 'faceRight', 'faceBack', 'faceBottom', 'iso1', 'iso2', 'iso3', 'iso4', 'more',
  'dots', 'dimLine', 'dimRedH', 'dimRedV', 'dimAngle', 'dimRadius', 'dimDia', 'sep', 'dimText', 'hatch', 'more'
]

const rows = [
  { id: 1, level: 0, icon: 'sceneRed', label: 'Scene4' },
  { id: 2, level: 1, icon: 'axes', label: 'Global Coordinate System' },
  { id: 3, level: 1, icon: 'part', label: 'Part1', bold: true, open: true },
  { id: 4, level: 2, icon: 'blockY', label: 'Block' },
  { id: 5, level: 2, icon: 'blockY', label: 'Block' },
  { id: 6, level: 2, icon: 'blockW', label: 'H Cylinder', sel: true },
  { id: 7, level: 1, icon: 'camera', label: 'Cameras' },
  { id: 8, level: 1, icon: 'light', label: 'Lights', last: true }
]

const statusIcons = [
  'zoomFit', 'zoom', 'caret', 'stYellow', 'caret', 'stBlue', 'caret', 'stPan', 'caret', 'stSlab',
  'stGlass', 'caret', 'stBox', 'caret', 'stPart', 'caret', 'selGrey', 'arrow', 'selBox'
]
</script>

<style>
html, body { margin: 0; background: #e6e6e6; overflow: hidden; }
</style>

<style scoped>
.app {
  width: 1907px;
  height: 1037px;
  display: flex;
  flex-direction: column;
  background: #e6e6e6;
  font-family: Roboto, "Liberation Sans", sans-serif;
  font-size: 11.8px;
  color: #3c3c3c;
  overflow: hidden;
}

.ico { width: 16px; height: 16px; flex: none; }

.caret {
  display: inline-block;
  width: 0;
  height: 0;
  border-left: 3px solid transparent;
  border-right: 3px solid transparent;
  border-top: 3px solid #555;
  flex: none;
}
.caret-white { border-top-color: #fff; }

/* title */
.titlebar {
  height: 28px;
  flex: none;
  display: flex;
  align-items: center;
  background: #2b5797;
  color: #fff;
}
.qat {
  display: flex;
  align-items: center;
  width: 1058px;
  padding-left: 0;
  padding-bottom: 4px;
  box-sizing: border-box;
}
.qat-ico { width: 18px; height: 18px; margin-right: 6.2px; }
.qat .caret { margin-left: 2px; }
.title { flex: 1; color: #f0f0f0; padding-bottom: 2px; }
.win-btns { display: flex; align-items: center; padding-bottom: 2px; }
.win-btn { width: 12px; height: 12px; margin-left: 25px; }
.win-close { margin-left: 23px; margin-right: -1px; }

/* menu */
.menubar {
  height: 28px;
  flex: none;
  display: flex;
  align-items: flex-end;
  background: #2b5797;
  color: #f0f0f0;
}
.menu-btn {
  width: 60px;
  height: 28px;
  line-height: 31px;
  text-align: center;
  background: #2f62ae;
  margin-right: 3px;
}
.tab { height: 26px; line-height: 26px; padding: 0 14px; }
.tab:nth-child(10) { margin-left: 3px; }
.tab:nth-child(11) { margin-left: 1px; }
.tab.active {
  background: #f0f0f0;
  color: #2a66c8;
  padding: 0 17px;
  margin: 0 -2px 0 4px;
}
.tab.active + .tab { margin-left: 3px; }
.menu-right {
  margin-left: auto;
  height: 28px;
  display: flex;
  align-items: center;
  color: #e8eef8;
}
.car-a { margin-left: 8px; }
.help { width: 16px; height: 16px; margin-left: 5px; }
.car-b { margin-left: 8px; }
.help-q { font: bold 13px "Liberation Sans", sans-serif; fill: #d0101a; }
.mini-btn { width: 11px; height: 11px; }
.mini-min { margin-left: 7px; }
.mini-res { margin-left: 9px; }
.mini-x { margin-left: 5px; margin-right: -6px; }

/* ribbon */
.ribbon {
  height: 98px;
  flex: none;
  display: flex;
  background: #f0f0f0;
  border-bottom: 1px solid #dcdcdc;
}
.group {
  display: flex;
  flex-direction: column;
  border-right: 1px solid #dedede;
  box-sizing: border-box;
  height: 97px;
}
.group-body { flex: 1; display: flex; padding-top: 5px; }
.group-name { height: 25px; text-align: center; color: #5f5f5f; line-height: 28px; }
.col { display: flex; flex-direction: column; }
.rb-item {
  height: 22px;
  display: flex;
  align-items: center;
  gap: 2px;
  white-space: nowrap;
}
.rb-ico { width: 18px; height: 18px; margin-left: -2px; }
.rb-item.off { color: #a8a8a8; }
.rb-item.on {
  background: #c6c6c6;
  margin-left: -4px;
  padding-left: 4px;
  width: 73px;
}
.rb-caret { margin-left: 4px; }
.big {
  display: flex;
  flex-direction: column;
  align-items: center;
}
.big.off { color: #a8a8a8; }
.ico-big { width: 28px; height: 32px; flex: none; margin-top: 2px; }
.big-lbl { margin-top: 3px; line-height: 16px; }
.big-caret { margin-top: 5px; }

.g-edit { width: 110px; }
.g-edit .group-body { padding-left: 14px; }
.g-edit .big { width: 30px; margin-right: 11px; }

.g-display { width: 280px; }
.g-display .group-body { padding-left: 10px; }
.g-display .col:first-of-type { width: 122px; }

.g-format { width: 205px; }
.g-format .group-body { padding-left: 13px; }
.g-format .big { width: 28px; margin-right: 10px; }

.g-catalogs { width: 179px; }
.g-catalogs .group-body { padding-left: 9px; }
.g-catalogs .col:first-of-type { width: 77px; }

.g-window { width: 272px; }
.g-window .group-body { padding-left: 12px; }
.g-window .big { width: 32px; margin-right: 14px; }
.g-window .col:nth-of-type(2) { width: 97px; }

/* tool row */
.toolrow { height: 31px; flex: none; padding: 0 0 0 7px; box-sizing: border-box; }
.toolstrip {
  width: 550px;
  height: 30px;
  background: #f0f0f0;
  display: flex;
  align-items: center;
  box-sizing: border-box;
  padding-left: 5px;
}
.grip {
  width: 1px;
  height: 20px;
  border-left: 2px dotted #aaa;
  margin-right: 7px;
}
.tool-ico { margin-right: 3px; }
.tool-on {
  width: 20px;
  height: 22px;
  background: #e2e2e2;
  display: flex;
  align-items: center;
  justify-content: center;
  margin-right: 3px;
}
.combo {
  width: 145px;
  height: 24px;
  box-sizing: border-box;
  padding: 0 6px 0 4px;
  margin-right: 6px;
  background: #fff;
  border: 1px solid #d0d0d0;
  color: #444;
  display: flex;
  align-items: center;
  justify-content: space-between;
}
.combo-off { background: #e4e4e4; margin-left: 1px; margin-right: 5px; color: #333; }
.combo-off .caret { border-top-color: #bbb; }
.tree-ico { margin-left: -1px; }

/* doc tabs */
.docrow { height: 21px; flex: none; padding-left: 29px; }
.doctab {
  width: 106px;
  height: 21px;
  box-sizing: border-box;
  padding-left: 32px;
  padding-right: 7px;
  display: flex;
  align-items: center;
  justify-content: space-between;
  background: #f4f4f4;
  border: 1px solid #c8c8c8;
  border-bottom: 0;
  clip-path: polygon(14px 0, 100% 0, 100% 100%, 0 100%);
  color: #444;
  font-weight: 500;
}
.doc-x { width: 9px; height: 9px; }

/* main */
.main { flex: none; height: 779px; display: flex; }
.strip {
  width: 26px;
  flex: none;
  background: #efefef;
  display: flex;
  flex-direction: column;
  align-items: center;
  padding-top: 164px;
  box-sizing: border-box;
}
.strip-ico { height: 22px; width: 19px; }
.dots {
  width: 14px;
  height: 2px;
  margin: 3px 0 3px;
  background-image: linear-gradient(90deg, #b0b0b0 50%, transparent 50%);
  background-size: 3px 2px;
  flex: none;
}
.more + .dots { margin-top: 7px; }
.strip-sep { width: 20px; height: 1px; background: #d4d4d4; margin: 4px 0 3px; flex: none; }
.more {
  width: 0;
  height: 0;
  margin: 2px 6px 3px 0;
  border-top: 3px solid transparent;
  border-bottom: 3px solid transparent;
  border-right: 3px solid #888;
  flex: none;
}

.panel {
  width: 236px;
  flex: none;
  display: flex;
  flex-direction: column;
  background: #efefef;
}
.panel-head {
  height: 26px;
  flex: none;
  display: flex;
  align-items: center;
  padding: 0 0 2px 3px;
  box-sizing: border-box;
  color: #555;
}
.panel-caret {
  margin-left: auto;
  border-left-width: 4px;
  border-right-width: 4px;
  border-top-width: 5px;
  border-top-color: #777;
}
.pin { width: 9px; height: 11px; margin-left: 11px; }
.pin-x { width: 9px; height: 9px; margin-left: 11px; margin-right: 7px; }
.search {
  height: 20px;
  flex: none;
  display: flex;
  align-items: center;
  background: #fff;
  margin-right: 1px;
  color: #666;
}
.search-text { flex: 1; padding: 0 0 5px 3px; }
.search-x {
  width: 17px;
  height: 18px;
  background: #e4e0d8;
  border: 1px solid #bbb;
  display: flex;
  align-items: center;
  justify-content: center;
  box-sizing: border-box;
  margin-right: 4px;
}
.search-x svg { width: 13px; height: 13px; }
.search .ico { background: #ebe6cf; margin-right: 2px; }

.tree {
  flex: 1;
  background: #fff;
  border: 1px solid #9a9a9a;
  box-sizing: border-box;
  padding-top: 1px;
  margin-right: 1px;
  color: #222;
}
.row { height: 18px; display: flex; align-items: center; }
.row-ico { width: 16px; height: 16px; flex: none; }
.lv2 .row-ico { width: 18px; }
.lbl { padding: 0 3px; margin-left: 2px; line-height: 18px; white-space: nowrap; }
.bold { font-weight: 700; }
.sel { background: #3399ff; color: #fff; }
.lv0 { padding-left: 3px; }
.lv1 { padding-left: 8px; }
.lv2 { padding-left: 12px; }
.guide { width: 1px; height: 18px; border-left: 1px dotted #888; flex: none; box-sizing: border-box; }
.exp {
  width: 9px;
  height: 9px;
  box-sizing: border-box;
  border: 1px solid #8c9ab0;
  background: #f4f6fa;
  position: relative;
  flex: none;
}
.lv2 .exp { margin-left: 14px; }
.exp::before, .exp::after {
  content: "";
  position: absolute;
  left: 3px;
  width: 1px;
  border-left: 1px dotted #888;
}
.exp::before { top: -6px; height: 5px; }
.exp::after { top: 8px; height: 5px; }
.exp.last::after { display: none; }
.minus { position: absolute; left: 1px; top: 3px; width: 5px; height: 1px; background: #333; }
.plus { position: absolute; left: 3px; top: 1px; width: 1px; height: 5px; background: #333; }
.hdot { width: 6px; border-top: 1px dotted #888; flex: none; }
.lv2 .hdot { width: 4px; }

.panel-tabs { height: 24px; flex: none; display: flex; color: #444; }
.ptab {
  display: flex;
  align-items: center;
  gap: 3px;
  height: 21px;
  padding: 0 8px 0 0;
}
.ptab-on {
  width: 57px;
  box-sizing: border-box;
  background: #fff;
  border: 1px solid #c8c8c8;
  border-top: 0;
  padding: 0 0 0 3px;
  gap: 1px;
  margin-left: 1px;
  margin-right: 5px;
}

.view {
  flex: 1;
  margin-left: 5px;
  min-width: 0;
  background: linear-gradient(#3e4358, #9a9ca4);
}
.scene { display: block; width: 100%; height: 100%; }
.dim-text text {
  font: 22px "Liberation Sans", sans-serif;
  fill: #14e6ee;
  text-anchor: middle;
}
.triad-text text { font: 11px "Liberation Sans", sans-serif; text-anchor: middle; }

/* catalog */
.catalog { height: 31px; flex: none; padding-left: 7px; }
.cat-tab { display: flex; align-items: center; gap: 3px; height: 25px; color: #555; }
.cat-bar { display: block; width: 103px; height: 6px; background: #dcdcdc; }

/* status */
.status {
  height: 21px;
  flex: none;
  display: flex;
  align-items: center;
  background: #f0f0f0;
  border-top: 1px solid #d2d2d2;
  box-sizing: border-box;
  color: #444;
  white-space: nowrap;
}
.st-help { width: 1155px; padding-left: 2px; box-sizing: border-box; flex: none; }
.st-size { width: 137px; flex: none; }
.st-units { width: 92px; flex: none; }
.st-ico { margin-right: 7px; }
.st-caret { margin-right: 8px; margin-left: -2px; }
.st-on {
  width: 22px;
  height: 20px;
  background: #d2d2d2;
  display: flex;
  align-items: center;
  justify-content: center;
  margin-right: 6px;
}
.st-combo {
  height: 20px;
  box-sizing: border-box;
  border: 1px solid #d4d4d4;
  background: #f7f7f7;
  display: flex;
  align-items: center;
  justify-content: space-between;
  padding: 0 5px 0 2px;
  flex: none;
}
.st-drill { width: 89px; margin-left: -8px; margin-right: 1px; }
.st-def { width: 64px; }
</style>
